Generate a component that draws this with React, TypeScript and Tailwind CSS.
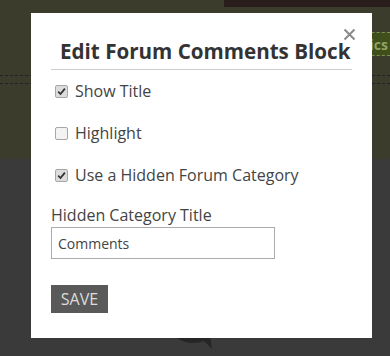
import { useState } from 'react'

function Check({ checked, onToggle }: { checked: boolean; onToggle: () => void }) {
  return (
    <button
      type="button"
      onClick={onToggle}
      className={`ml-[4px] flex h-[13px] w-[13px] shrink-0 items-center justify-center rounded-[2px] border border-[#a7a7a7] ${checked ? 'bg-[#dcdcdc]' : 'bg-[#f3f3f3]'}`}
    >
      {checked && (
        <svg width="9" height="9" viewBox="0 0 9 9">
          <path d="M1.2 4.6 L3.5 7 L7.9 1.6" fill="none" stroke="#333" strokeWidth="1.8" />
        </svg>
      )}
    </button>
  )
}

export default function App() {
  const [opts, setOpts] = useState({ title: true, highlight: false, hidden: true })
  const [name, setName] = useState('Comments')

  const rows: { key: keyof typeof opts; label: string }[] = [
    { key: 'title', label: 'Show Title' },
    { key: 'highlight', label: 'Highlight' },
    { key: 'hidden', label: 'Use a Hidden Forum Category' },
  ]

  return (
    <div className="relative h-[356px] w-[390px] overflow-hidden font-['Open_Sans',sans-serif]">
      {/* page behind the overlay */}
      <div className="relative h-[159px] bg-[#3b3c2b]">
        <div className="ml-[224px] h-[7px] bg-[#2a1e1c]" />
        <div className="mt-[25px] ml-[330px] flex h-[24px] items-center justify-end border-y border-dashed border-[#7f8d5a] bg-[#3e4f1c] pr-[2px] text-[14px] font-bold text-[#8fa264]">
          ics
        </div>
        <div className="mt-[19px] border-t border-dashed border-[#222]" />
        <div className="mt-[7px] border-t border-dashed border-[#222]" />
      </div>
      <div className="relative h-[197px] bg-[#3a3a3a]">
        <svg className="absolute left-[170px] top-[176px]" width="50" height="14" viewBox="0 0 50 14">
          <path d="M4 0 C10 8 24 10 34 6 L42 14 L40 0 Z" fill="#262626" />
        </svg>
      </div>

      {/* modal */}
      <div className="absolute left-[31px] top-[13px] w-[341px] bg-white px-[20px] pb-[25px] pt-[24px]">
        <button type="button" className="absolute right-[16px] top-[15px] p-[0px]">
          <svg width="13" height="13" viewBox="0 0 13 13">
            <path d="M1.5 1.5 L11.5 11.5 M11.5 1.5 L1.5 11.5" stroke="#8a8a8a" strokeWidth="2" />
          </svg>
        </button>
        <h2 className="whitespace-nowrap border-b border-[#cccccc] pb-[4px] pl-[9px] text-[20.6px] leading-[28px] font-bold text-[#333]">
          Edit Forum Comments Block
        </h2>

        <div className="mt-[9px] flex flex-col gap-[18px]">
          {rows.map(r => (
            <label key={r.key} className="flex h-[24px] items-center gap-[7px] text-[16px] leading-[24px] text-[#444]">
              <Check checked={opts[r.key]} onToggle={() => setOpts(o => ({ ...o, [r.key]: !o[r.key] }))} />
              {r.label}
            </label>
          ))}
        </div>

        <div className="mt-[16px] text-[16px] leading-[24px] text-[#444]">Hidden Category Title</div>
        <input
          value={name}
          onChange={e => setName(e.target.value)}
          className="block h-[32px] w-[224px] border border-[#ababab] px-[6px] text-[14px] text-[#444] outline-none"
        />

        <button type="button" className="mt-[26px] block h-[28px] w-[57px] bg-[#595959] text-[16px] text-[#dddddd]">
          SAVE
        </button>
      </div>
    </div>
  )
}
